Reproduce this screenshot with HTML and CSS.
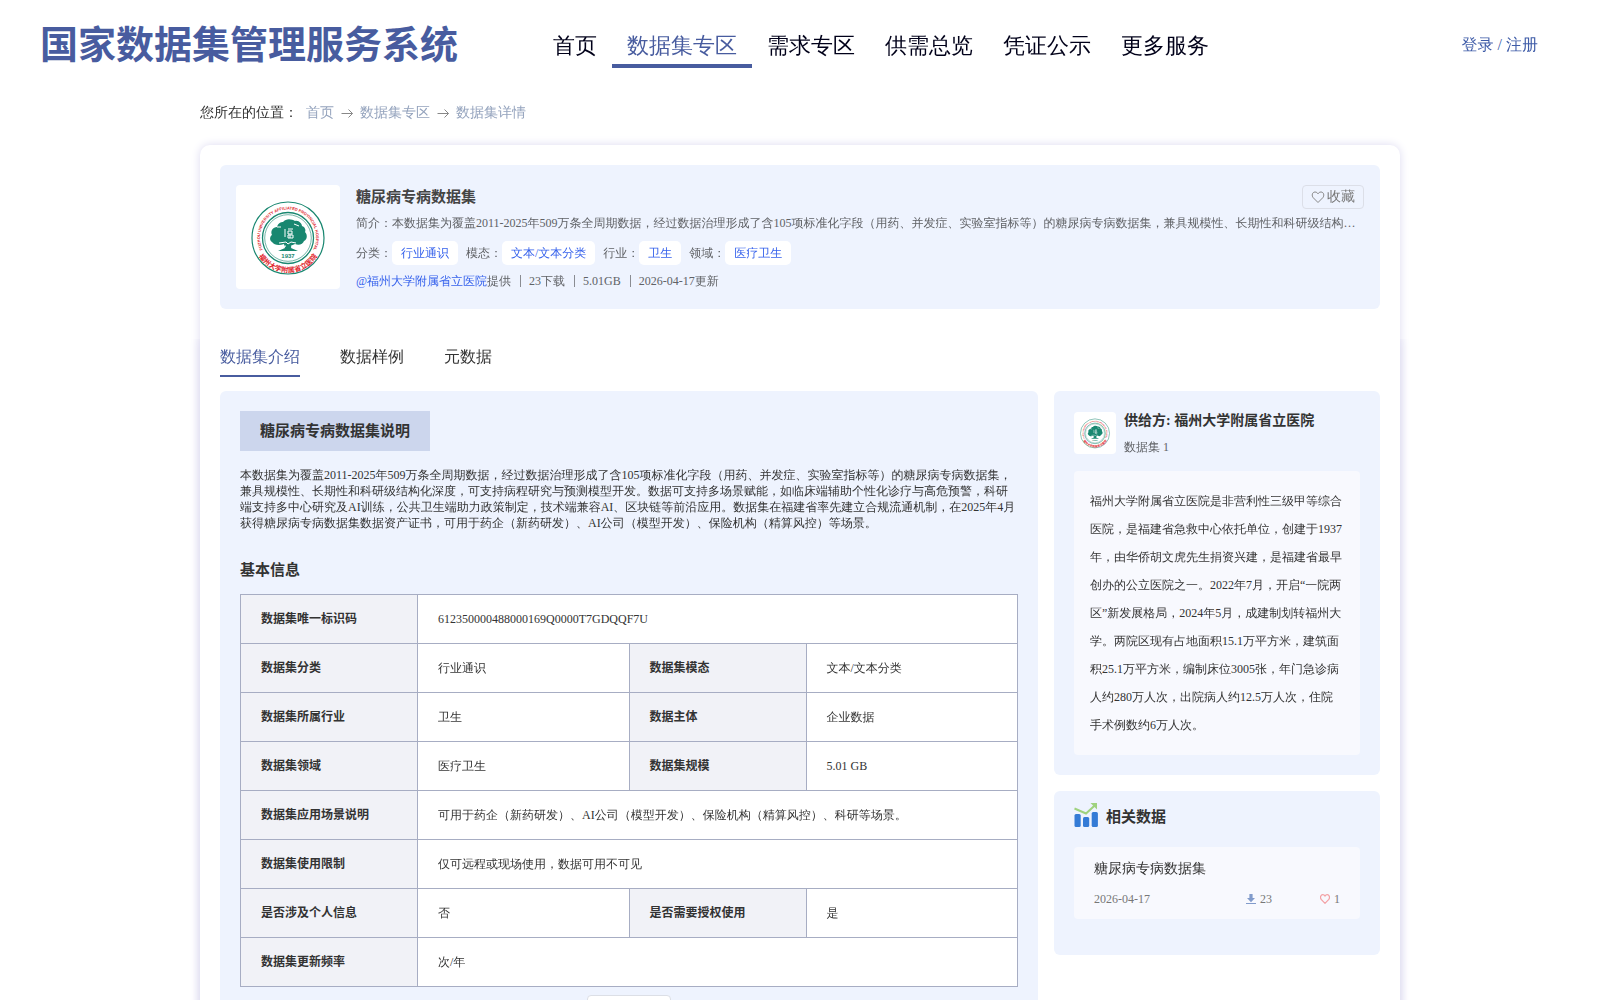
FILE: index.html
```html
<!DOCTYPE html>
<html lang="zh-CN">
<head>
<meta charset="utf-8">
<meta name="viewport" content="width=device-width, initial-scale=1">
<title>国家数据集管理服务系统</title>
<link rel="stylesheet" href="styles.css">
</head>
<body>
<header class="site-header">
  <h1 class="site-name">国家数据集管理服务系统</h1>
  <nav class="main-nav">
    <a href="#">首页</a>
    <a href="#" class="active">数据集专区</a>
    <a href="#">需求专区</a>
    <a href="#">供需总览</a>
    <a href="#">凭证公示</a>
    <a href="#">更多服务</a>
  </nav>
  <div class="account"><a href="#">登录</a> / <a href="#">注册</a></div>
</header>

<div class="page">
  <nav class="breadcrumb">
    <span class="breadcrumb-label">您所在的位置：</span>
    <a href="#">首页</a>
    <svg width="14" height="14" viewBox="0 0 14 14"><path d="M1.500 7.500H12.500M8.500 3.500l4 4-4 4"/></svg>
    <a href="#">数据集专区</a>
    <svg width="14" height="14" viewBox="0 0 14 14"><path d="M1.500 7.500H12.500M8.500 3.500l4 4-4 4"/></svg>
    <a href="#">数据集详情</a>
  </nav>

  <main class="card">
    <section class="summary">
      <svg class="logo" viewBox="0 0 104 104" role="img" aria-label="福州大学附属省立医院">
        <defs>
          <path id="arc-top" d="M27.500 66A28 28 0 1 1 76.500 66"/>
          <path id="arc-bottom" d="M17.500 53A34.500 34.500 0 0 0 86.500 53"/>
        </defs>
        <g id="emblem">
          <circle class="ring" cx="52" cy="53" r="36" stroke-width="1.200"/>
          <circle class="ring" cx="52" cy="53" r="25.500" stroke-width="1.300"/>
          <circle class="ring" cx="52" cy="53" r="23.300" stroke-width=".6"/>
          <text class="ring-text"><textPath href="#arc-top" startOffset="50%">FUZHOU UNIVERSITY AFFILIATED PROVINCIAL HOSPITAL</textPath></text>
          <text class="ring-text-cn"><textPath href="#arc-bottom" startOffset="50%">福州大学附属省立医院</textPath></text>
          <path class="tree" d="M36 57c-3-2-2-6 0-7-2-4 1-8 5-8 1-4 4-5 6-5 3-4 9-3 12-1 4-1 7 3 7 5 3 1 4 4 3 6 3 3 2 8-1 9-1 3-5 5-9 3-4 2-8 2-11 0-5 2-10 1-12-2z"/>
          <path class="tree" d="M47 55h10l-2 8 7 3H42l7-3z"/>
          <path class="branch" d="M43 58l7-1 2 2 3-2 5 1M45 62l5-1M59 62l-4-1M41 42h4M58 39l5 2"/>
          <path class="branch" d="M49 44v8M52 44h5M52 46h4v3h-4zM52 50h5v3h-5zM54 50v3"/>
          <text class="year" x="52" y="73">1937</text>
        </g>
      </svg>
      <div class="summary-body">
        <div class="summary-head">
          <h2>糖尿病专病数据集</h2>
          <button type="button" class="favorite">
            <svg width="14" height="14" viewBox="0 0 14 14"><path d="M7 12.500L2.200 7.700C.4 5.600 1.200 2 4 2c1.400 0 2.400.8 3 1.800C7.600 2.800 8.600 2 10 2c2.800 0 3.600 3.600 1.800 5.700z"/></svg>收藏
          </button>
        </div>
        <p class="intro">简介：本数据集为覆盖2011-2025年509万条全周期数据，经过数据治理形成了含105项标准化字段（用药、并发症、实验室指标等）的糖尿病专病数据集，兼具规模性、长期性和科研级结构化深度，可支持病程研究与预测模型开发。</p>
        <div class="tags">
          <div class="tag">分类：<span>行业通识</span></div>
          <div class="tag">模态：<span>文本/文本分类</span></div>
          <div class="tag">行业：<span>卫生</span></div>
          <div class="tag">领域：<span>医疗卫生</span></div>
        </div>
        <div class="meta">
          <div><a href="#">@福州大学附属省立医院</a>提供</div><i></i>
          <div>23下载</div><i></i>
          <div>5.01GB</div><i></i>
          <div>2026-04-17更新</div>
        </div>
      </div>
    </section>

    <div class="detail">
      <div class="tabs">
        <button type="button" class="active">数据集介绍</button>
        <button type="button">数据样例</button>
        <button type="button">元数据</button>
      </div>
      <div class="columns">
        <section class="panel description">
          <h3 class="ribbon">糖尿病专病数据集说明</h3>
          <p class="text">本数据集为覆盖2011-2025年509万条全周期数据，经过数据治理形成了含105项标准化字段（用药、并发症、实验室指标等）的糖尿病专病数据集，兼具规模性、长期性和科研级结构化深度，可支持病程研究与预测模型开发。数据可支持多场景赋能，如临床端辅助个性化诊疗与高危预警，科研端支持多中心研究及AI训练，公共卫生端助力政策制定，技术端兼容AI、区块链等前沿应用。数据集在福建省率先建立合规流通机制，在2025年4月获得糖尿病专病数据集数据资产证书，可用于药企（新药研发）、AI公司（模型开发）、保险机构（精算风控）等场景。</p>
          <h3 class="subtitle">基本信息</h3>
          <table class="info">
            <colgroup><col class="key"><col><col class="key"><col></colgroup>
            <tbody>
              <tr><th scope="row">数据集唯一标识码</th><td colspan="3">612350000488000169Q0000T7GDQQF7U</td></tr>
              <tr><th scope="row">数据集分类</th><td>行业通识</td><th scope="row">数据集模态</th><td>文本/文本分类</td></tr>
              <tr><th scope="row">数据集所属行业</th><td>卫生</td><th scope="row">数据主体</th><td>企业数据</td></tr>
              <tr><th scope="row">数据集领域</th><td>医疗卫生</td><th scope="row">数据集规模</th><td>5.01 GB</td></tr>
              <tr><th scope="row">数据集应用场景说明</th><td colspan="3">可用于药企（新药研发）、AI公司（模型开发）、保险机构（精算风控）、科研等场景。</td></tr>
              <tr><th scope="row">数据集使用限制</th><td colspan="3">仅可远程或现场使用，数据可用不可见</td></tr>
              <tr><th scope="row">是否涉及个人信息</th><td>否</td><th scope="row">是否需要授权使用</th><td>是</td></tr>
              <tr><th scope="row">数据集更新频率</th><td colspan="3">次/年</td></tr>
            </tbody>
          </table>
          <button type="button" class="more" aria-label="更多"></button>
        </section>

        <aside class="side">
          <section class="panel provider">
            <div class="provider-head">
              <svg class="logo-small" viewBox="0 0 104 104" aria-hidden="true"><use href="#emblem"/></svg>
              <div>
                <h3>供给方: 福州大学附属省立医院</h3>
                <p>数据集 1</p>
              </div>
            </div>
            <p class="provider-text">福州大学附属省立医院是非营利性三级甲等综合医院，是福建省急救中心依托单位，创建于1937年，由华侨胡文虎先生捐资兴建，是福建省最早创办的公立医院之一。2022年7月，开启“一院两区”新发展格局，2024年5月，成建制划转福州大学。两院区现有占地面积15.1万平方米，建筑面积25.1万平方米，编制床位3005张，年门急诊病人约280万人次，出院病人约12.5万人次，住院手术例数约6万人次。</p>
          </section>
          <section class="panel related">
            <h3>
              <svg width="24" height="24" viewBox="0 0 24 24"><g fill="#347bd6"><rect x="0.500" y="11" width="6.200" height="13" rx="1.500"/><rect x="9" y="14" width="6.200" height="10" rx="1.500"/><rect x="17.700" y="9" width="6.200" height="15" rx="1.500"/></g><path d="M.5 5.500L12 10.500 21 2.200" fill="none" stroke="#9fd27f" stroke-width="2"/><path d="M16.500 0H23v6.500z" fill="#9fd27f"/></svg>相关数据
            </h3>
            <article class="related-item">
              <a href="#">糖尿病专病数据集</a>
              <div class="related-meta">
                <time>2026-04-17</time>
                <span class="downloads"><svg width="10" height="10" viewBox="0 0 10 10"><path d="M3.400 0h3.200v4h2.400L5 8.200 1 4h2.400zM0 9h10v1H0z" fill="#819bcb"/></svg>23</span>
                <span class="likes"><svg width="10" height="10" viewBox="0 0 10 10"><path d="M5 9.300L1.200 5.400C-.2 3.400.8.7 2.800.7 3.900.7 4.600 1.300 5 2 5.400 1.300 6.100.7 7.200.7c2 0 3 2.700 1.600 4.700z" fill="none" stroke="#f3a0a4" stroke-width="1.200"/></svg>1</span>
              </div>
            </article>
          </section>
        </aside>
      </div>
    </div>
  </main>
</div>
</body>
</html>
```
FILE: styles.css
```css
* { box-sizing: border-box; }
body {
  margin: 0;
  background: #fff;
  color: #333;
  font-family: "Liberation Serif", "WenQuanYi Zen Hei", "Noto Sans CJK SC", serif;
  font-size: 12px;
  line-height: 16px;
  text-spacing-trim: space-all;
}
h1, h2, h3, th { font-family: "Liberation Serif", "Noto Sans CJK SC", serif; }
h1, h2, h3, p { margin: 0; }
a { color: inherit; text-decoration: none; }
button { font: inherit; color: inherit; cursor: pointer; }

.site-header {
  display: flex;
  align-items: center;
  height: 90px;
  padding: 0 62px 0 40px;
}
.site-name { color: #485c9f; font-size: 38px; line-height: 48px; }
.main-nav { display: flex; margin-left: 80px; }
.main-nav a {
  padding: 6px 15px 0;
  border-bottom: 4px solid transparent;
  color: #000019;
  font-size: 22px;
  line-height: 36px;
}
.main-nav .active { border-color: #485c9f; color: #485c9f; }
.account { margin-left: auto; color: #3f5ca8; font-size: 16px; line-height: 20px; }

.page { max-width: 1200px; margin: 0 auto; }
.breadcrumb {
  display: flex;
  align-items: center;
  gap: 6px;
  padding: 13px 0 22px;
  color: #94a3bd;
  font-size: 14px;
  line-height: 20px;
}
.breadcrumb-label { margin-right: 2px; color: #333; }
.breadcrumb svg { fill: none; stroke: #888; }

.card {
  padding-top: 20px;
  border-radius: 10px;
  box-shadow: 0 0 10px #dcdaf0;
}
.summary {
  display: flex;
  gap: 16px;
  margin: 0 20px;
  padding: 20px 16px;
  border-radius: 6px;
  background: #eef3fe;
  color: #606266;
}
.logo { flex: none; width: 104px; height: 104px; border-radius: 4px; background: #fff; }
.ring { fill: none; stroke: #198770; }
.ring-text { fill: #e02128; font: bold 4px "Liberation Sans Narrow", "Liberation Sans", sans-serif; text-anchor: middle; }
.ring-text-cn { fill: #e02128; font: bold 7px "Noto Sans CJK SC", sans-serif; text-anchor: middle; }
.tree { fill: #198770; }
.branch { fill: none; stroke: #fff; stroke-width: 1; }
.year { fill: #198770; font: bold 6px "Liberation Sans", sans-serif; text-anchor: middle; }

.summary-body { flex: 1; min-width: 0; }
.summary-head { display: flex; justify-content: space-between; height: 28px; }
.summary-head h2 { color: #444; font-size: 15px; line-height: 24px; }
.favorite {
  display: flex;
  align-items: center;
  gap: 2px;
  height: 24px;
  padding: 0 8px;
  border: 1px solid #dcdfe8;
  border-radius: 4px;
  background: none;
  color: #777;
  font-size: 14px;
}
.favorite svg { fill: none; stroke: #888; }
.intro {
  padding-right: 8px;
  overflow: hidden;
  line-height: 20px;
  text-overflow: ellipsis;
  white-space: nowrap;
}
.tags { display: flex; gap: 8px; margin-top: 8px; line-height: 24px; }
.tag { display: flex; }
.tag span { padding: 0 9px; border-radius: 5px; background: #fff; color: #3662ec; }
.meta { display: flex; align-items: center; margin-top: 8px; line-height: 16px; }
.meta a { color: #3662ec; }
.meta i { width: 1px; height: 12px; margin: 0 8px 0 9px; background: #8a8c92; }

.detail {
  margin-top: 30px;
  padding: 0 20px 20px;
  box-shadow: 0 0 10px #dcdaf0;
  clip-path: inset(0 -12px);
}
.tabs { display: flex; gap: 40px; height: 38px; }
.tabs button {
  padding: 0;
  border: 0;
  border-bottom: 2px solid transparent;
  background: none;
  font-size: 16px;
  line-height: 36px;
}
.tabs .active { border-color: #485c9f; color: #485c9f; }
.columns { display: flex; align-items: flex-start; gap: 16px; margin-top: 14px; }
.panel { border-radius: 6px; background: #eef3fe; }
.description { flex: 1; min-width: 0; padding: 20px; }
.ribbon {
  width: fit-content;
  padding: 0 20px;
  background: #ccd6ed;
  font-size: 15px;
  line-height: 40px;
}
.text { margin-top: 16px; }
.subtitle { margin: 29px 0 14px; font-size: 15px; line-height: 20px; }
.info { width: 100%; border-collapse: collapse; table-layout: fixed; }
.info .key { width: 177px; }
.info th, .info td {
  height: 49px;
  padding: 0 20px;
  border: 1px solid #a7adc3;
  background: #fff;
  text-align: left;
}
.info th { background: #f1f2f7; }
.more {
  display: block;
  width: 84px;
  height: 32px;
  margin: 8px auto 0;
  border: 1px solid #dcdfe6;
  border-radius: 4px;
  background: #fff;
}

.side { display: grid; flex: none; gap: 16px; width: 326px; }
.provider { padding: 20px; }
.provider-head { display: flex; align-items: center; gap: 8px; }
.provider-head h3 { font-size: 14px; line-height: 20px; }
.provider-head p { margin-top: 8px; color: #606266; }
.logo-small { width: 42px; height: 42px; border-radius: 4px; background: #fff; }
.provider-text {
  margin-top: 16px;
  padding: 16px;
  border-radius: 4px;
  background: #f8f9fe;
  line-height: 28px;
}
.related { padding: 12px 20px 36px; }
.related h3 { display: flex; align-items: flex-start; gap: 8px; font-size: 15px; line-height: 28px; }
.related-item {
  margin-top: 16px;
  padding: 12px 20px;
  border-radius: 4px;
  background: #f8f9fe;
}
.related-item a { display: block; font-size: 14px; line-height: 20px; }
.related-meta { display: flex; margin-top: 12px; color: #777; }
.related-meta span { display: flex; align-items: center; gap: 4px; }
.downloads { margin-left: auto; }
.likes { margin-left: 48px; }
```
